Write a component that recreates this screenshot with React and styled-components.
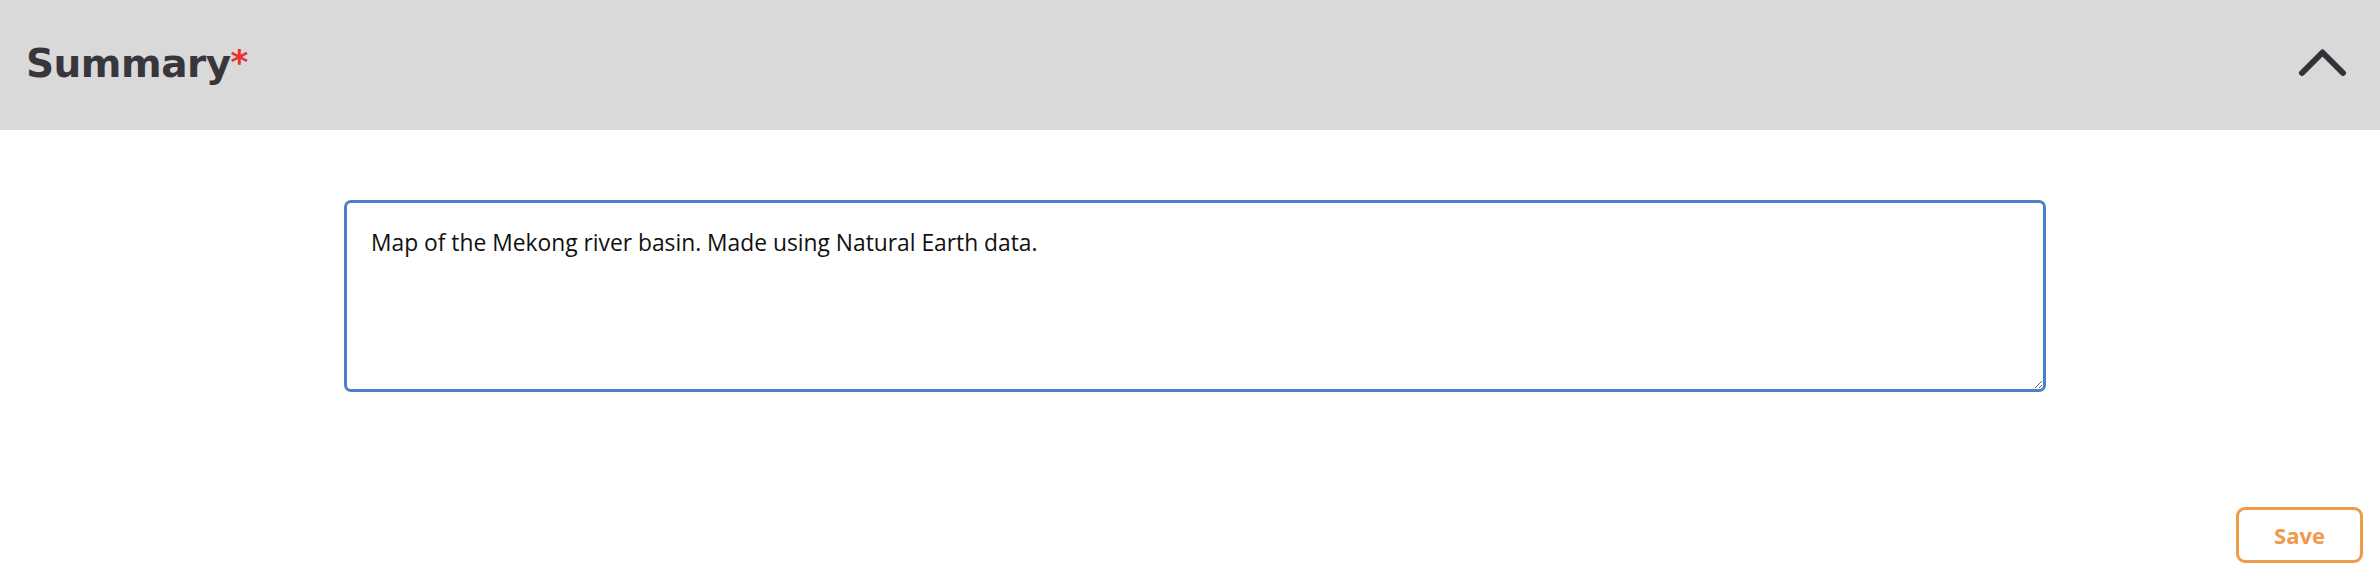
import { useState } from "react";
import styled, { createGlobalStyle } from "styled-components";

const GlobalStyle = createGlobalStyle`
  html, body {
    margin: 0;
    padding: 0;
    background: #ffffff;
    font-family: "Open Sans", "Noto Sans", sans-serif;
  }
`;

const Panel = styled.section`
  width: 2380px;
  height: 580px;
  display: flex;
  flex-direction: column;
`;

const Header = styled.div`
  height: 130px;
  background-color: #d9d9d9;
  display: flex;
  align-items: center;
  justify-content: space-between;
  padding: 0 33px 4px 26px;
  box-sizing: border-box;
`;

const Title = styled.h2`
  margin: 0;
  font-family: "DejaVu Sans", sans-serif;
  font-weight: 700;
  font-size: 39px;
  letter-spacing: -0.5px;
  color: #38363c;
  span {
    color: #e8322a;
    font-size: 34px;
    vertical-align: 3px;
  }
`;

const Toggle = styled.button`
  border: none;
  background: none;
  padding: 0;
  width: 50px;
  height: 32px;
  display: flex;
  align-items: center;
  justify-content: center;
  cursor: pointer;
`;

const Body = styled.div`
  flex: 1;
  display: flex;
  flex-direction: column;
  padding: 70px 17px 17px 27px;
`;

const Field = styled.textarea`
  display: block;
  width: 1702px;
  height: 192px;
  margin: 0 auto;
  box-sizing: border-box;
  border: 3px solid #4a80cc;
  border-radius: 7px;
  padding: 24px 24px;
  font-family: "Open Sans", sans-serif;
  font-size: 22.8px;
  color: #111;
  outline: none;
  resize: vertical;
`;

const Footer = styled.div`
  margin-top: auto;
  display: flex;
  justify-content: flex-end;
`;

const SaveButton = styled.button`
  width: 127px;
  height: 56px;
  box-sizing: border-box;
  border: 3px solid #f09a4b;
  border-radius: 9px;
  background: #fff;
  color: #f09a4b;
  font-family: "Open Sans", sans-serif;
  font-weight: 700;
  font-size: 22px;
  cursor: pointer;
`;

const ChevronUp = () => (
  <svg width="50" height="32" viewBox="0 0 50 32">
    <path
      d="M5 26 L25.5 5.5 L46 26"
      fill="none"
      stroke="#333238"
      strokeWidth="6"
      strokeLinecap="round"
      strokeLinejoin="round"
    />
  </svg>
);

export default function App() {
  const [text, setText] = useState(
    "Map of the Mekong river basin. Made using Natural Earth data."
  );

  return (
    <>
      <GlobalStyle />
      <Panel>
        <Header>
          <Title>
            Summary<span>*</span>
          </Title>
          <Toggle aria-label="collapse">
            <ChevronUp />
          </Toggle>
        </Header>
        <Body>
          <Field value={text} onChange={(e) => setText(e.target.value)} />
          <Footer>
            <SaveButton>Save</SaveButton>
          </Footer>
        </Body>
      </Panel>
    </>
  );
}
